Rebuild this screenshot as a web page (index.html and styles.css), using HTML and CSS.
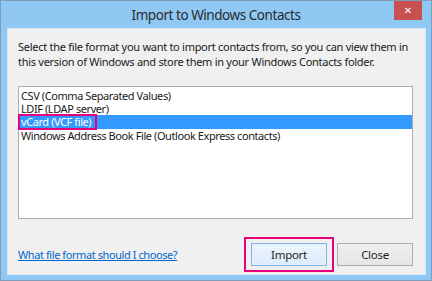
FILE: index.html
```html
<!DOCTYPE html>
<html lang="en">
<head>
    <meta charset="UTF-8">
    <title>Import to Windows Contacts</title>
    <link rel="stylesheet" href="styles.css">
</head>
<body>
    <div class="window">
        <div class="titlebar">
            <span class="spacer"></span>
            <h1 class="title">Import to Windows Contacts</h1>
            <span class="close-x">&#x2715;</span>
        </div>

        <div class="panel">
            <p class="intro">Select the file format you want to import contacts from, so you can view them in this version of Windows and store them in your Windows Contacts folder.</p>

            <ul class="listbox">
                <li>CSV (Comma Separated Values)</li>
                <li>LDIF (LDAP server)</li>
                <li class="selected"><span class="mark">vCard (VCF file)</span></li>
                <li>Windows Address Book File (Outlook Express contacts)</li>
            </ul>

            <div class="footer">
                <a href="#" class="help">What file format should I choose?</a>
                <div class="buttons">
                    <span class="mark-btn"><button class="btn btn-default">Import</button></span>
                    <button class="btn">Close</button>
                </div>
            </div>
        </div>
    </div>
</body>
</html>
```

FILE: styles.css
```css
* {
    box-sizing: border-box;
    margin: 0;
    padding: 0;
}

body {
    width: 432px;
    height: 281px;
    overflow: hidden;
    font-family: "Noto Sans", sans-serif;
    color: #1e1e1e;
}

.window {
    width: 432px;
    height: 281px;
    background-color: #8ec8f3;
    border: 1px solid #7f9db9;
    display: flex;
    flex-direction: column;
}

.titlebar {
    height: 27px;
    display: grid;
    grid-template-columns: 30px 1fr 30px;
    align-items: start;
}

.title {
    font-size: 13.5px;
    letter-spacing: -0.45px;
    font-weight: normal;
    color: #2b2b2b;
    text-align: center;
    line-height: 27px;
    padding-top: 1px;
}

.close-x {
    width: 28px;
    height: 19px;
    margin-left: -7px;
    background-color: #c75050;
    color: #fff;
    font-family: "DejaVu Sans", sans-serif;
    font-size: 10px;
    font-weight: bold;
    text-align: center;
    line-height: 19px;
}

.panel {
    flex: 1;
    margin: 0 5px 5px 6px;
    background-color: #f0f0f0;
    border: 1px solid #dbe8f3;
    padding: 11px 12px 0 10px;
    display: flex;
    flex-direction: column;
}

.intro {
    font-size: 11px;
    letter-spacing: -0.28px;
    line-height: 14.5px;
    color: #1a1a1a;
}

.listbox {
    list-style: none;
    margin-top: 17px;
    height: 133px;
    background-color: #fff;
    border: 1px solid #acacac;
    padding: 2px 0 0 0;
    font-size: 11px;
    letter-spacing: -0.42px;
    line-height: 13px;
    color: #1a1a1a;
}

.listbox li {
    padding-left: 2px;
    height: 13px;
    white-space: nowrap;
}

.listbox .selected {
    background-color: #3399ff;
    color: #fff;
    height: 14px;
    line-height: 14px;
}

/* annotation box drawn over the selected entry */
.mark {
    position: relative;
}

.mark::after {
    content: "";
    position: absolute;
    left: -3px;
    right: -6px;
    top: 0;
    bottom: -1px;
    border: 2px solid #e6007e;
}

.footer {
    margin-top: 18px;
    display: flex;
    align-items: center;
    justify-content: space-between;
}

.help {
    font-size: 11px;
    letter-spacing: -0.42px;
    color: #0066cc;
    text-decoration: underline;
}

.buttons {
    display: flex;
    gap: 10px;
    align-items: center;
}

.mark-btn {
    display: inline-block;
    border: 2px solid #e6007e;
    padding: 4px 5px;
    margin-right: -7px;
}

.btn {
    display: block;
    width: 76px;
    height: 23px;
    font-family: "Noto Sans", sans-serif;
    font-size: 11.5px;
    letter-spacing: -0.3px;
    color: #1e1e1e;
    background: linear-gradient(#f0f0f0, #e5e5e5);
    border: 1px solid #acacac;
}

.btn-default {
    border: 1px solid #7eb4ea;
    background: linear-gradient(#ecf4fc, #dcecfc);
    box-shadow: inset 0 0 0 1px #e5f1fb;
}
```
